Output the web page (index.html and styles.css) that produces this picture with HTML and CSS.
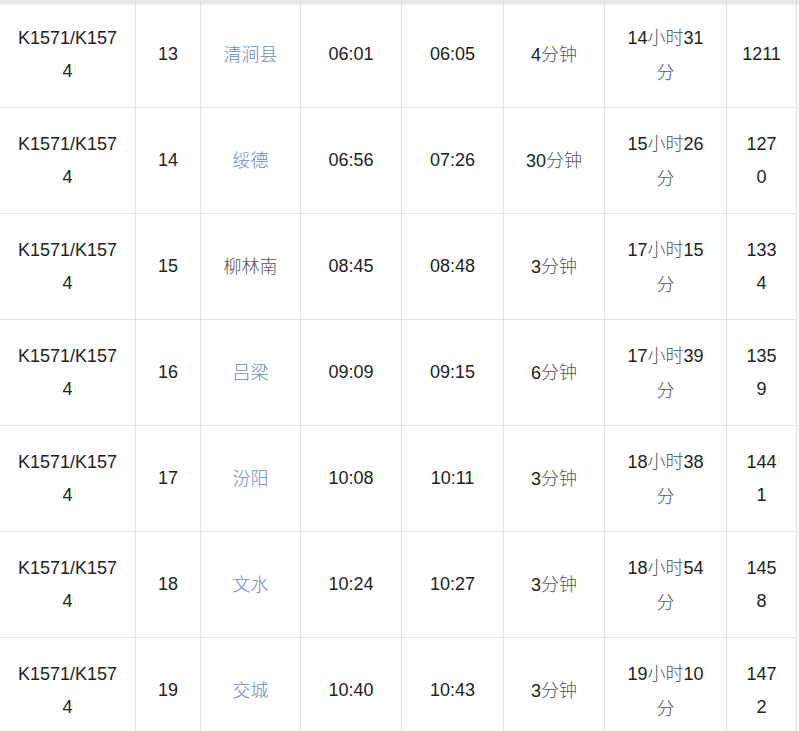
FILE: index.html
```html
<!DOCTYPE html>
<html lang="zh-CN">
<head>
<meta charset="utf-8">
<link rel="stylesheet" href="styles.css">
</head>
<body>
<div class="shadow"></div>
<div class="grid">
  <div class="c"><p>K1571/K157<br>4</p></div><div class="c"><p>13</p></div><div class="c"><p><a class="st">清涧县</a></p></div><div class="c"><p>06:01</p></div><div class="c"><p>06:05</p></div><div class="c"><p>4<span class="zh">分钟</span></p></div><div class="c"><p>14<span class="zh">小时</span>31<br><span class="zh">分</span></p></div><div class="c"><p>1211</p></div>
  <div class="c"><p>K1571/K157<br>4</p></div><div class="c"><p>14</p></div><div class="c"><p><a class="st">绥德</a></p></div><div class="c"><p>06:56</p></div><div class="c"><p>07:26</p></div><div class="c"><p>30<span class="zh">分钟</span></p></div><div class="c"><p>15<span class="zh">小时</span>26<br><span class="zh">分</span></p></div><div class="c"><p>127<br>0</p></div>
  <div class="c"><p>K1571/K157<br>4</p></div><div class="c"><p>15</p></div><div class="c"><p><span class="zh">柳林南</span></p></div><div class="c"><p>08:45</p></div><div class="c"><p>08:48</p></div><div class="c"><p>3<span class="zh">分钟</span></p></div><div class="c"><p>17<span class="zh">小时</span>15<br><span class="zh">分</span></p></div><div class="c"><p>133<br>4</p></div>
  <div class="c"><p>K1571/K157<br>4</p></div><div class="c"><p>16</p></div><div class="c"><p><a class="st">吕梁</a></p></div><div class="c"><p>09:09</p></div><div class="c"><p>09:15</p></div><div class="c"><p>6<span class="zh">分钟</span></p></div><div class="c"><p>17<span class="zh">小时</span>39<br><span class="zh">分</span></p></div><div class="c"><p>135<br>9</p></div>
  <div class="c"><p>K1571/K157<br>4</p></div><div class="c"><p>17</p></div><div class="c"><p><a class="st">汾阳</a></p></div><div class="c"><p>10:08</p></div><div class="c"><p>10:11</p></div><div class="c"><p>3<span class="zh">分钟</span></p></div><div class="c"><p>18<span class="zh">小时</span>38<br><span class="zh">分</span></p></div><div class="c"><p>144<br>1</p></div>
  <div class="c"><p>K1571/K157<br>4</p></div><div class="c"><p>18</p></div><div class="c"><p><a class="st">文水</a></p></div><div class="c"><p>10:24</p></div><div class="c"><p>10:27</p></div><div class="c"><p>3<span class="zh">分钟</span></p></div><div class="c"><p>18<span class="zh">小时</span>54<br><span class="zh">分</span></p></div><div class="c"><p>145<br>8</p></div>
  <div class="c"><p>K1571/K157<br>4</p></div><div class="c"><p>19</p></div><div class="c"><p><a class="st">交城</a></p></div><div class="c"><p>10:40</p></div><div class="c"><p>10:43</p></div><div class="c"><p>3<span class="zh">分钟</span></p></div><div class="c"><p>19<span class="zh">小时</span>10<br><span class="zh">分</span></p></div><div class="c"><p>147<br>2</p></div>
</div>
</body>
</html>
```
FILE: styles.css
```css
html, body {
  margin: 0;
  padding: 0;
  background: #fff;
}
body {
  font-family: "Liberation Sans", Arial, "Noto Sans CJK SC", sans-serif;
  font-size: 18px;
  color: #222;
  overflow: hidden;
}
.shadow {
  position: absolute;
  left: 0;
  top: 0;
  width: 100%;
  height: 6px;
  background: linear-gradient(to bottom, rgba(0,0,0,0.02) 0px, rgba(0,0,0,0.13) 1px, rgba(0,0,0,0.09) 3px, rgba(0,0,0,0) 6px);
  pointer-events: none;
}
.grid {
  display: grid;
  grid-template-columns: 136px 65px 100px 101px 102px 101px 122px 70px;
  padding-top: 2px;
}
.c {
  box-sizing: border-box;
  height: 106px;
  border-right: 1px solid #e3e3e3;
  border-bottom: 1px solid #e3e3e3;
  display: flex;
  align-items: center;
  justify-content: center;
  text-align: center;
  line-height: 33px;
}
.c p {
  margin: 0;
  white-space: nowrap;
}
.zh {
  font-family: "Noto Sans CJK SC", sans-serif;
  font-weight: 300;
  color: #555;
}
.st {
  font-family: "Noto Sans CJK SC", sans-serif;
  font-weight: 300;
  color: #6a88c2;
  text-decoration: none;
}
```
